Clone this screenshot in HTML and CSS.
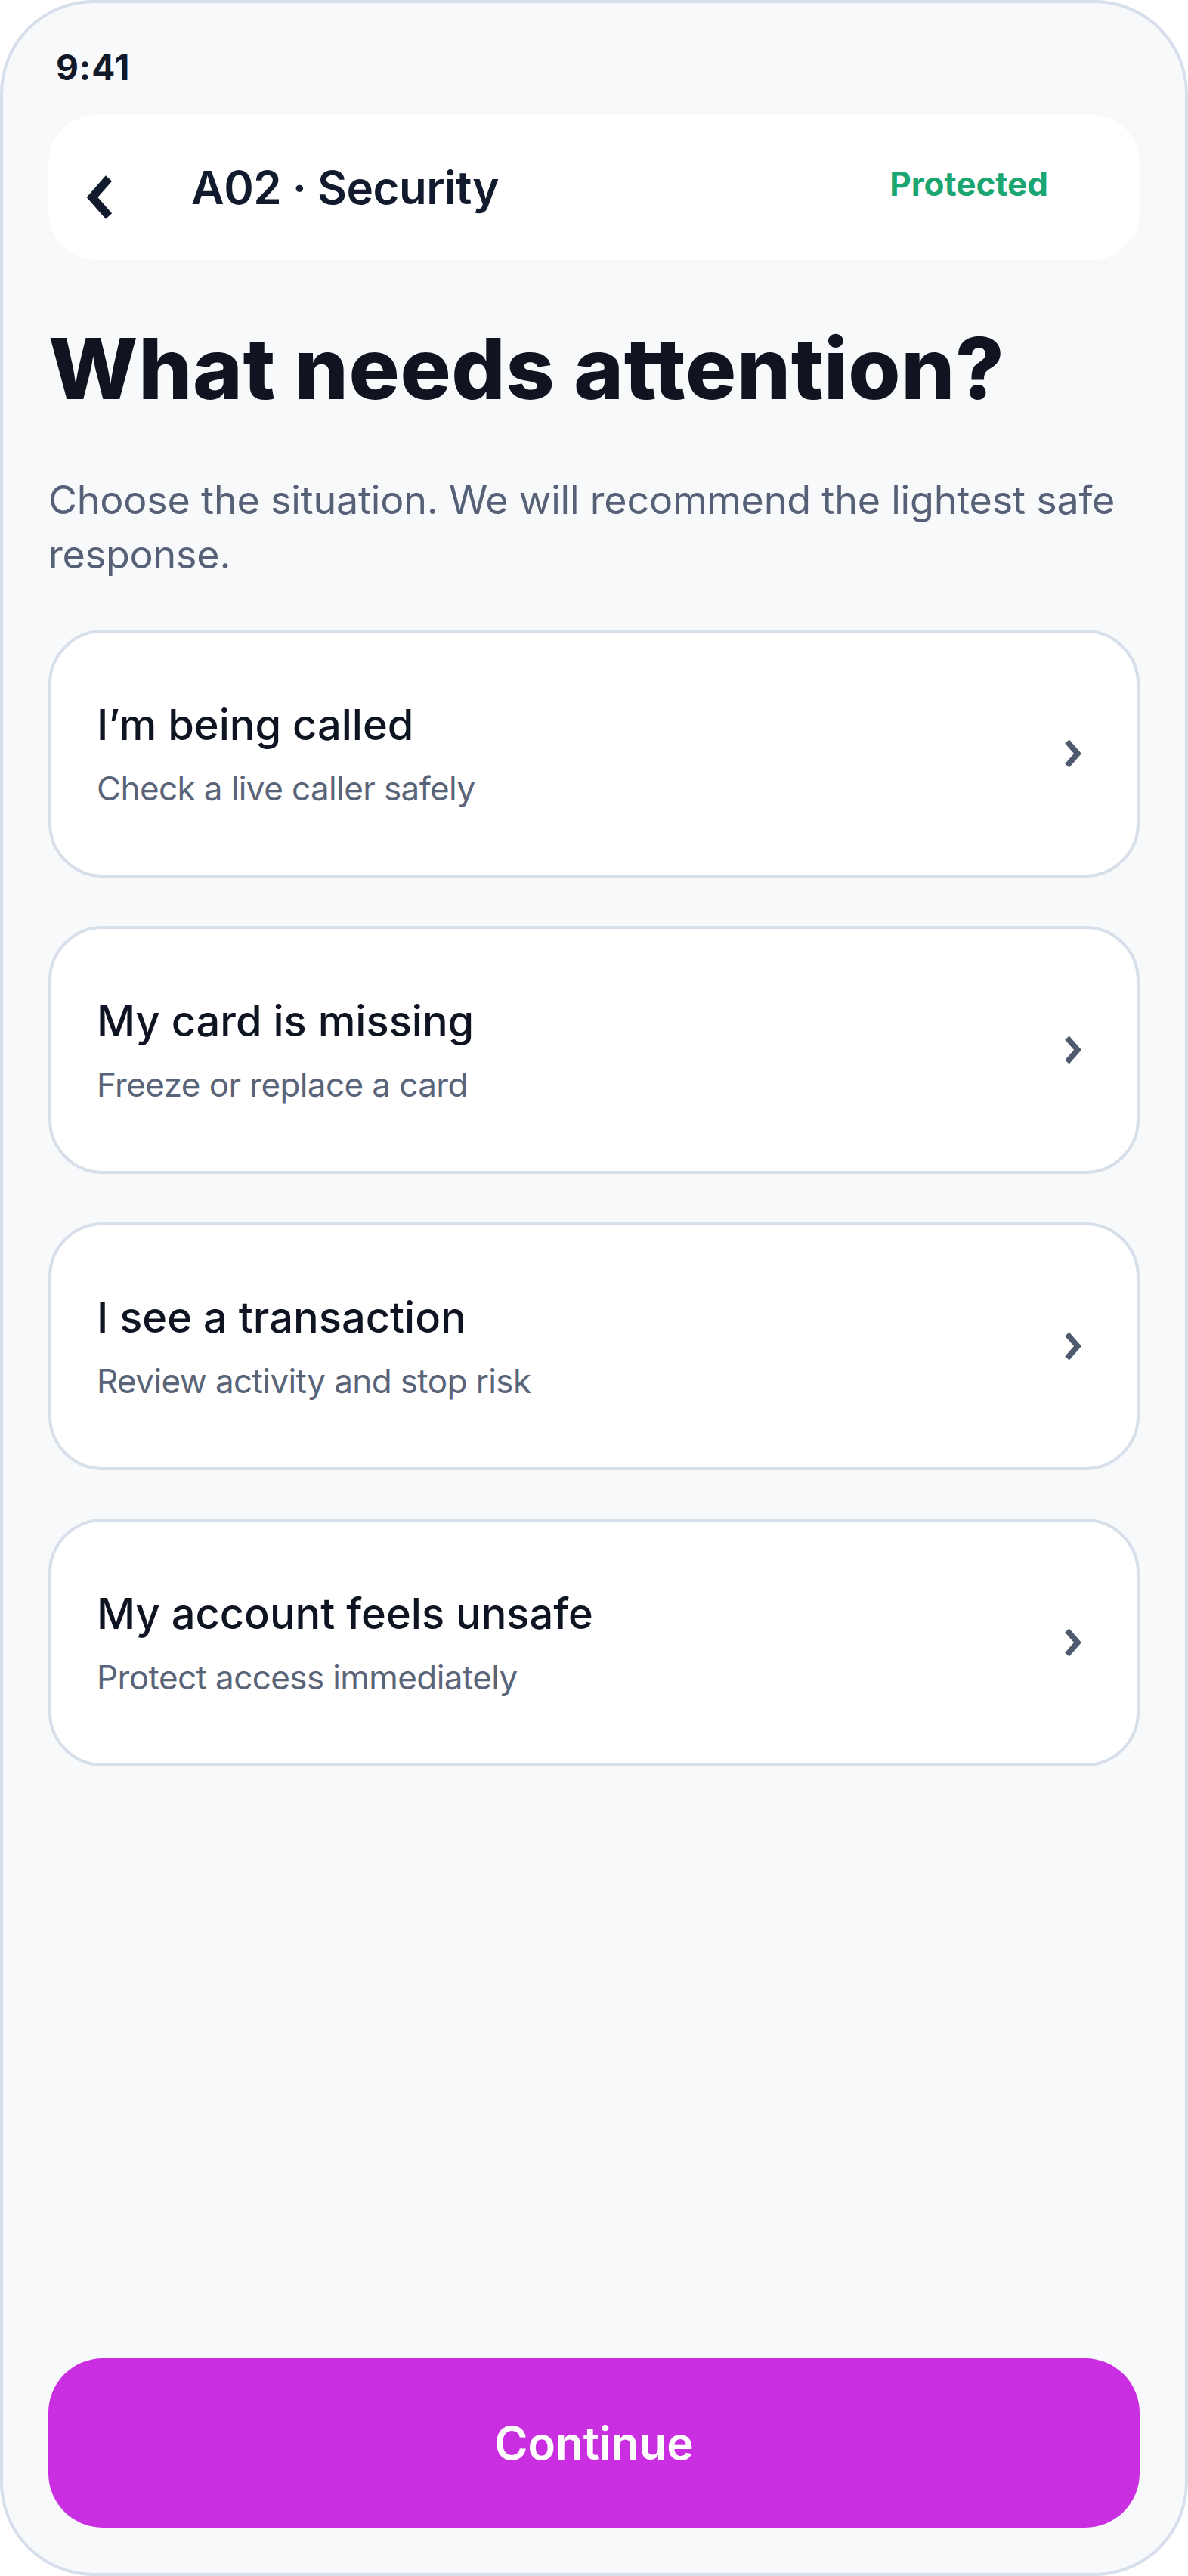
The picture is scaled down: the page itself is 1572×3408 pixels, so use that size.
FILE: index.html
```html
<!DOCTYPE html>
<html lang="en">
<head>
<meta charset="utf-8">
<title>A02 · Security</title>
<link rel="stylesheet" href="styles.css">
</head>
<body>
<div class="phone">
  <div class="status">9:41</div>
  <header class="topbar">
    <span class="back" aria-label="Back">
      <svg width="44" height="60" viewBox="0 0 44 60"><path d="M36 6 L14 31 L36 56" fill="none" stroke="#121a2e" stroke-width="11" stroke-linejoin="miter"/></svg>
    </span>
    <span class="topbar-title">A02 · Security</span>
    <span class="status-pill">Protected</span>
  </header>
  <h1 class="heading">What needs attention?</h1>
  <p class="lead">Choose the situation. We will recommend the lightest safe response.</p>
  <div class="options">
    <div class="option">
      <div class="option-text">
        <div class="option-title">I’m being called</div>
        <div class="option-sub">Check a live caller safely</div>
      </div>
      <svg class="chev" width="28" height="40" viewBox="0 0 28 40"><path d="M6 4 L20 20 L6 36" fill="none" stroke="#4f5a6e" stroke-width="7.5"/></svg>
    </div>
    <div class="option">
      <div class="option-text">
        <div class="option-title">My card is missing</div>
        <div class="option-sub">Freeze or replace a card</div>
      </div>
      <svg class="chev" width="28" height="40" viewBox="0 0 28 40"><path d="M6 4 L20 20 L6 36" fill="none" stroke="#4f5a6e" stroke-width="7.5"/></svg>
    </div>
    <div class="option">
      <div class="option-text">
        <div class="option-title">I see a transaction</div>
        <div class="option-sub">Review activity and stop risk</div>
      </div>
      <svg class="chev" width="28" height="40" viewBox="0 0 28 40"><path d="M6 4 L20 20 L6 36" fill="none" stroke="#4f5a6e" stroke-width="7.5"/></svg>
    </div>
    <div class="option">
      <div class="option-text">
        <div class="option-title">My account feels unsafe</div>
        <div class="option-sub">Protect access immediately</div>
      </div>
      <svg class="chev" width="28" height="40" viewBox="0 0 28 40"><path d="M6 4 L20 20 L6 36" fill="none" stroke="#4f5a6e" stroke-width="7.5"/></svg>
    </div>
  </div>
  <button class="cta">Continue</button>
</div>
</body>
</html>
```
FILE: styles.css
```css
* { box-sizing: border-box; }
html, body { margin: 0; padding: 0; background: #ffffff; }
body { font-family: Inter, "Noto Sans", "Liberation Sans", sans-serif; color: #0f1422; }

.phone {
  width: 1572px;
  height: 3408px;
  border: 4px solid #d6dfeb;
  border-radius: 124px;
  background: #f8f9fb;
  padding: 0 60px 60px;
  display: flex;
  flex-direction: column;
  overflow: hidden;
}

.status {
  height: 148px;
  padding: 61px 0 0 10px;
  font-size: 46px;
  line-height: 48px;
  font-weight: 700;
  color: #111827;
  letter-spacing: 1px;
}

.topbar {
  height: 192px;
  flex: none;
  background: #ffffff;
  border-radius: 64px;
  display: flex;
  align-items: center;
  padding: 0 121px 0 44px;
}
.back { display: flex; width: 44px; height: 60px; margin-top: 24px; }
.topbar-title {
  margin-left: 101px;
  font-size: 60px;
  font-weight: 600;
  color: #121a2e;
  letter-spacing: -0.5px;
}
.status-pill {
  margin-left: auto;
  margin-top: -10px;
  font-size: 44px;
  font-weight: 700;
  color: #1aa571;
}

.heading {
  margin: 79px 0 0 0;
  font-size: 112px;
  line-height: 129px;
  font-weight: 800;
  letter-spacing: 0.6px;
  color: #0f1420;
}

.lead {
  margin: 74px 0 0 0;
  font-size: 52px;
  line-height: 72px;
  font-weight: 400;
  letter-spacing: -0.2px;
  color: #566177;
}

.options {
  margin-top: 63px;
  display: flex;
  flex-direction: column;
  gap: 64px;
}
.option {
  height: 328px;
  background: #ffffff;
  border: 4px solid #d7dfeb;
  border-radius: 72px;
  display: flex;
  align-items: center;
  padding: 0 70px 0 60px;
}
.option-text { flex: 1; display: flex; flex-direction: column; gap: 20px; }
.option-title {
  font-size: 56px;
  line-height: 72px;
  font-weight: 500;
  color: #0f1422;
}
.option-sub {
  font-size: 44px;
  line-height: 56px;
  font-weight: 400;
  letter-spacing: -0.6px;
  color: #5a6478;
}
.chev { flex: none; }

.cta {
  margin-top: auto;
  height: 224px;
  width: 100%;
  border: none;
  border-radius: 72px;
  background: #c92fe0;
  color: #ffffff;
  font-family: inherit;
  font-size: 60px;
  font-weight: 600;
}
```
